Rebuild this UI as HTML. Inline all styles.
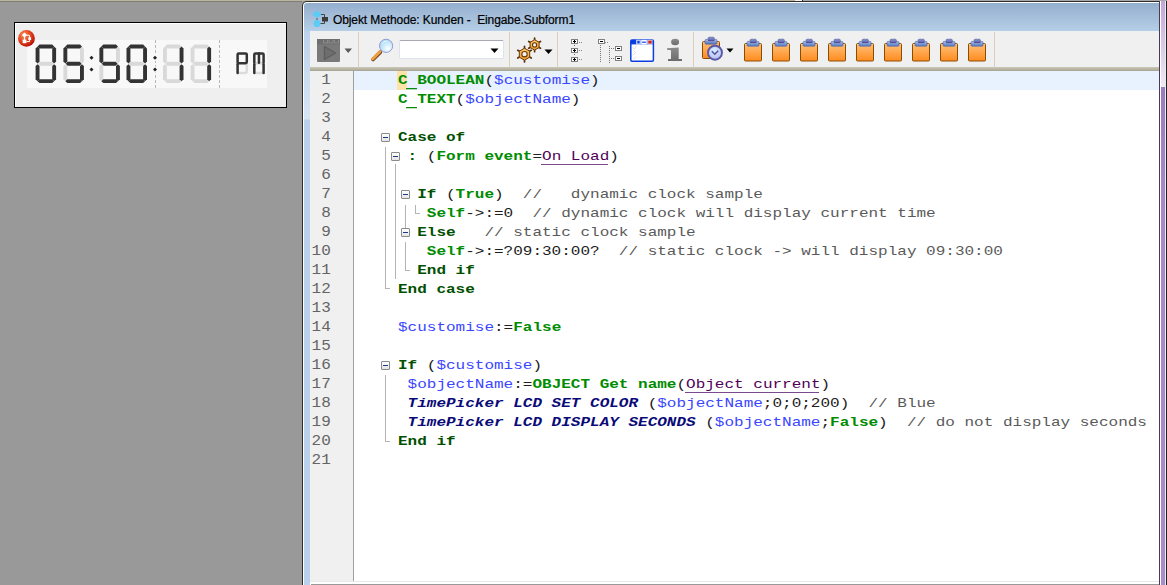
<!DOCTYPE html>
<html><head><meta charset="utf-8">
<style>
*{margin:0;padding:0;box-sizing:border-box}
html,body{width:1167px;height:585px;overflow:hidden;background:#999999;position:relative;font-family:"Liberation Sans",sans-serif}
.abs{position:absolute}
#topstrip{position:absolute;left:0;top:0;width:1167px;height:1px;background:#b9b5a0}
#topstrip2{position:absolute;left:0;top:1px;width:302px;height:1px;background:#7f7d74}
#clockbox{position:absolute;left:14px;top:22px;width:273px;height:86px;border:1px solid #000;background:#efefef;box-shadow:inset 1px 1px 0 #fff}
#clocksvg{position:absolute;left:0;top:0}
#win{position:absolute;left:302px;top:1px;width:858px;height:584px;background:#2e2e2e;border-top-left-radius:5px}
#frame{position:absolute;left:303px;top:2px;width:856px;height:583px;background:#fff;border-top-left-radius:4px}
#title{position:absolute;left:304px;top:3px;width:855px;height:28px;background:linear-gradient(#94aece,#b5cfe8);border-top-left-radius:3px}
#lframe{position:absolute;left:304px;top:31px;width:6px;height:554px;background:linear-gradient(#bcd3ec 0,#d6e5f4 88px,#b9d1ea 89px,#b9d1ea 100%)}
#ttext{position:absolute;left:333px;top:13px;font-size:12px;color:#000;white-space:pre;letter-spacing:-0.1px;-webkit-text-stroke:0.2px #000}
#toolbar{position:absolute;left:310px;top:31px;width:849px;height:36px;background:#f0f0f0}
#tbbot{position:absolute;left:310px;top:67px;width:849px;height:4px;background:linear-gradient(#ccc8b8,#a8a494)}
.sep{position:absolute;top:32px;width:1px;height:36px;background:#d8d0b8}
#gutter{position:absolute;left:310px;top:71px;width:43px;height:510px;background:#f0f0f0}
#gline{position:absolute;left:353px;top:71px;width:1px;height:510px;background:#a0a0a0}
#code{position:absolute;left:354px;top:71px;width:805px;height:510px;background:#fff}
#hl{position:absolute;left:354px;top:71px;width:805px;height:19px;background:#e8f2fe}
#cursor{position:absolute;left:397px;top:71px;width:10px;height:19px;background:#fde3a8}
#bot1{position:absolute;left:310px;top:581px;width:849px;height:1px;background:#e8e8e8}
#bot2{position:absolute;left:310px;top:582px;width:849px;height:2px;background:#fff}
#bot3{position:absolute;left:311px;top:584px;width:848px;height:1px;background:#999}
#rframe{position:absolute;left:1159px;top:1px;width:8px;height:584px;background:linear-gradient(90deg,#4a3a5a 0,#4a3a5a 1px,#fff 1px,#fff 2px,#c8b4dc 2px,#c8b4dc 6px,#f0e8f4 6px,#f0e8f4 7px,#222 7px)}
.ln{position:absolute;left:309.8px;width:21px;text-align:right;height:19px;line-height:19px;font-family:"Liberation Mono",monospace;font-size:16px;color:#646464;transform:scaleY(0.88);transform-origin:0 13px}
.cl{position:absolute;height:19px;line-height:19px;font-family:"Liberation Mono",monospace;font-size:16px;white-space:pre;color:#202020;transform:scaleY(0.85);transform-origin:0 13px}
.k{color:#008c00;font-weight:bold}
.c{color:#005000;font-weight:bold}
.v{color:#3a46ff}
.u{color:#50005a}
.n{color:#0a0a78;font-weight:bold;font-style:italic}
.m{color:#5a5a5a}
.p{color:#202020}
.cbox{position:absolute;width:9px;height:9px;border:1px solid #8a8a8a;border-radius:1px;background:linear-gradient(#fff,#e4e4e4)}
.cbox i{position:absolute;left:1px;top:3px;width:5px;height:1px;background:#1a3a8a}
.tl{position:absolute;background:#b4b4b4}
.ic{position:absolute}
</style></head><body>
<div id="topstrip"></div><div id="topstrip2"></div>
<div class="abs" style="left:795px;top:0;width:7px;height:1px;background:#f4f4f0"></div>
<div class="abs" style="left:802px;top:0;width:1px;height:1px;background:#333"></div>
<div class="abs" style="left:803px;top:0;width:364px;height:1px;background:#a8a8a8"></div>

<div id="clockbox"></div>
<div class="abs" style="left:27px;top:40px;width:240px;height:48px;background:#f8f8f8"></div>
<svg id="clocksvg" width="300" height="120" viewBox="0 0 300 120">
<line x1="155.5" y1="40" x2="155.5" y2="88" stroke="#b8b8b8" stroke-width="1" stroke-dasharray="3,2"/><line x1="219.5" y1="40" x2="219.5" y2="88" stroke="#b8b8b8" stroke-width="1" stroke-dasharray="3,2"/><g transform="translate(35.6,44.5)"><polygon points="2.30,19.30 4.25,17.35 16.25,17.35 18.20,19.30 16.25,21.25 4.25,21.25" fill="#d9d9d9"/><polygon points="1.95,1.95 3.90,0.00 16.60,0.00 18.55,1.95 16.60,3.90 3.90,3.90" fill="#333333"/><polygon points="18.55,1.95 20.50,3.90 20.50,17.00 18.55,18.95 16.60,17.00 16.60,3.90" fill="#333333"/><polygon points="18.55,19.65 20.50,21.60 20.50,34.70 18.55,36.65 16.60,34.70 16.60,21.60" fill="#333333"/><polygon points="1.95,36.65 3.90,34.70 16.60,34.70 18.55,36.65 16.60,38.60 3.90,38.60" fill="#333333"/><polygon points="1.95,19.65 3.90,21.60 3.90,34.70 1.95,36.65 0.00,34.70 0.00,21.60" fill="#333333"/><polygon points="1.95,1.95 3.90,3.90 3.90,17.00 1.95,18.95 0.00,17.00 0.00,3.90" fill="#333333"/></g><g transform="translate(63.4,44.5)"><polygon points="18.55,1.95 20.50,3.90 20.50,17.00 18.55,18.95 16.60,17.00 16.60,3.90" fill="#d9d9d9"/><polygon points="1.95,19.65 3.90,21.60 3.90,34.70 1.95,36.65 0.00,34.70 0.00,21.60" fill="#d9d9d9"/><polygon points="1.95,1.95 3.90,0.00 16.60,0.00 18.55,1.95 16.60,3.90 3.90,3.90" fill="#333333"/><polygon points="18.55,19.65 20.50,21.60 20.50,34.70 18.55,36.65 16.60,34.70 16.60,21.60" fill="#333333"/><polygon points="1.95,36.65 3.90,34.70 16.60,34.70 18.55,36.65 16.60,38.60 3.90,38.60" fill="#333333"/><polygon points="1.95,1.95 3.90,3.90 3.90,17.00 1.95,18.95 0.00,17.00 0.00,3.90" fill="#333333"/><polygon points="2.30,19.30 4.25,17.35 16.25,17.35 18.20,19.30 16.25,21.25 4.25,21.25" fill="#333333"/></g><g transform="translate(99.4,44.5)"><polygon points="18.55,1.95 20.50,3.90 20.50,17.00 18.55,18.95 16.60,17.00 16.60,3.90" fill="#d9d9d9"/><polygon points="1.95,19.65 3.90,21.60 3.90,34.70 1.95,36.65 0.00,34.70 0.00,21.60" fill="#d9d9d9"/><polygon points="1.95,1.95 3.90,0.00 16.60,0.00 18.55,1.95 16.60,3.90 3.90,3.90" fill="#333333"/><polygon points="18.55,19.65 20.50,21.60 20.50,34.70 18.55,36.65 16.60,34.70 16.60,21.60" fill="#333333"/><polygon points="1.95,36.65 3.90,34.70 16.60,34.70 18.55,36.65 16.60,38.60 3.90,38.60" fill="#333333"/><polygon points="1.95,1.95 3.90,3.90 3.90,17.00 1.95,18.95 0.00,17.00 0.00,3.90" fill="#333333"/><polygon points="2.30,19.30 4.25,17.35 16.25,17.35 18.20,19.30 16.25,21.25 4.25,21.25" fill="#333333"/></g><g transform="translate(126.5,44.5)"><polygon points="2.30,19.30 4.25,17.35 16.25,17.35 18.20,19.30 16.25,21.25 4.25,21.25" fill="#d9d9d9"/><polygon points="1.95,1.95 3.90,0.00 16.60,0.00 18.55,1.95 16.60,3.90 3.90,3.90" fill="#333333"/><polygon points="18.55,1.95 20.50,3.90 20.50,17.00 18.55,18.95 16.60,17.00 16.60,3.90" fill="#333333"/><polygon points="18.55,19.65 20.50,21.60 20.50,34.70 18.55,36.65 16.60,34.70 16.60,21.60" fill="#333333"/><polygon points="1.95,36.65 3.90,34.70 16.60,34.70 18.55,36.65 16.60,38.60 3.90,38.60" fill="#333333"/><polygon points="1.95,19.65 3.90,21.60 3.90,34.70 1.95,36.65 0.00,34.70 0.00,21.60" fill="#333333"/><polygon points="1.95,1.95 3.90,3.90 3.90,17.00 1.95,18.95 0.00,17.00 0.00,3.90" fill="#333333"/></g><g transform="translate(163.0,44.5)"><polygon points="1.95,1.95 3.90,0.00 16.60,0.00 18.55,1.95 16.60,3.90 3.90,3.90" fill="#d9d9d9"/><polygon points="1.95,36.65 3.90,34.70 16.60,34.70 18.55,36.65 16.60,38.60 3.90,38.60" fill="#d9d9d9"/><polygon points="1.95,19.65 3.90,21.60 3.90,34.70 1.95,36.65 0.00,34.70 0.00,21.60" fill="#d9d9d9"/><polygon points="1.95,1.95 3.90,3.90 3.90,17.00 1.95,18.95 0.00,17.00 0.00,3.90" fill="#d9d9d9"/><polygon points="2.30,19.30 4.25,17.35 16.25,17.35 18.20,19.30 16.25,21.25 4.25,21.25" fill="#d9d9d9"/><polygon points="18.55,1.95 20.50,3.90 20.50,17.00 18.55,18.95 16.60,17.00 16.60,3.90" fill="#333333"/><polygon points="18.55,19.65 20.50,21.60 20.50,34.70 18.55,36.65 16.60,34.70 16.60,21.60" fill="#333333"/></g><g transform="translate(190.6,44.5)"><polygon points="1.95,1.95 3.90,0.00 16.60,0.00 18.55,1.95 16.60,3.90 3.90,3.90" fill="#d9d9d9"/><polygon points="1.95,36.65 3.90,34.70 16.60,34.70 18.55,36.65 16.60,38.60 3.90,38.60" fill="#d9d9d9"/><polygon points="1.95,19.65 3.90,21.60 3.90,34.70 1.95,36.65 0.00,34.70 0.00,21.60" fill="#d9d9d9"/><polygon points="1.95,1.95 3.90,3.90 3.90,17.00 1.95,18.95 0.00,17.00 0.00,3.90" fill="#d9d9d9"/><polygon points="2.30,19.30 4.25,17.35 16.25,17.35 18.20,19.30 16.25,21.25 4.25,21.25" fill="#d9d9d9"/><polygon points="18.55,1.95 20.50,3.90 20.50,17.00 18.55,18.95 16.60,17.00 16.60,3.90" fill="#333333"/><polygon points="18.55,19.65 20.50,21.60 20.50,34.70 18.55,36.65 16.60,34.70 16.60,21.60" fill="#333333"/></g><polygon points="89.5,57.8 91.5,55.8 93.5,57.8 91.5,59.8" fill="#222"/><polygon points="89.5,69.6 91.5,67.6 93.5,69.6 91.5,71.6" fill="#222"/><rect x="153" y="55" width="4" height="6" fill="#f8f8f8"/><rect x="153" y="66.5" width="4" height="6" fill="#f8f8f8"/><polygon points="153.0,57.8 155.0,55.8 157.0,57.8 155.0,59.8" fill="#222"/><polygon points="153.0,69.6 155.0,67.6 157.0,69.6 155.0,71.6" fill="#222"/><line x1="238.6" y1="73.1" x2="245.8" y2="73.1" stroke="#dcdcdc" stroke-width="2.5" stroke-linecap="round"/><line x1="246.8" y1="64.2" x2="246.8" y2="72.1" stroke="#dcdcdc" stroke-width="2.5" stroke-linecap="round"/><path d="M237.6,62.4 L237.6,54.6 Q237.6,53.4 238.79999999999998,53.4 L245.60000000000002,53.4 Q246.8,53.4 246.8,54.6 L246.8,62.099999999999994 Q246.8,63.3 245.60000000000002,63.3 L238.6,63.3" stroke="#333" stroke-width="2.5" fill="none" stroke-linecap="round" stroke-linejoin="round"/><line x1="237.6" y1="64.2" x2="237.6" y2="73.1" stroke="#333" stroke-width="2.5" stroke-linecap="round"/><line x1="255.3" y1="63.3" x2="262.6" y2="63.3" stroke="#dcdcdc" stroke-width="2.5" stroke-linecap="round"/><line x1="255.3" y1="73.1" x2="262.6" y2="73.1" stroke="#dcdcdc" stroke-width="2.5" stroke-linecap="round"/><path d="M254.3,62.4 L254.3,54.6 Q254.3,53.4 255.5,53.4 L262.40000000000003,53.4 Q263.6,53.4 263.6,54.6 L263.6,62.4" stroke="#333" stroke-width="2.5" fill="none" stroke-linecap="round" stroke-linejoin="round"/><line x1="258.95000000000005" y1="53.4" x2="258.95000000000005" y2="62.699999999999996" stroke="#333" stroke-width="2.5" stroke-linecap="round"/><line x1="254.3" y1="64.2" x2="254.3" y2="73.1" stroke="#333" stroke-width="2.5" stroke-linecap="round"/><line x1="263.6" y1="64.2" x2="263.6" y2="73.1" stroke="#333" stroke-width="2.5" stroke-linecap="round"/>
<defs><radialGradient id="rb" cx="0.35" cy="0.3" r="0.75"><stop offset="0" stop-color="#f8905a"/><stop offset="0.55" stop-color="#e0401c"/><stop offset="0.9" stop-color="#c01a0a"/><stop offset="1" stop-color="#a00a04"/></radialGradient></defs>
<circle cx="26.45" cy="38.4" r="8.4" fill="url(#rb)"/>
<polygon points="24.5,32.4 27.1,35.1 24.5,37.8 21.9,35.1" fill="#fff"/>
<line x1="24.5" y1="37" x2="24.5" y2="40" stroke="#fff" stroke-width="1.2"/>
<rect x="22.6" y="39.6" width="3.8" height="3.6" fill="#fff"/>
<path d="M26.5 35.3 H29.6 V41.6 H26.4" stroke="#fff" stroke-width="1" fill="none"/>
<rect x="28.3" y="37.2" width="2.8" height="2.8" fill="#fff"/>
</svg>

<div id="win"></div>
<div id="frame"></div>
<div id="title"></div>
<div id="lframe"></div>
<svg class="ic" style="left:310px;top:9px" width="22" height="20" viewBox="0 0 22 20">
<polygon points="7,1.5 12,5.5 7,9 2,5.5" fill="#5ccbf5"/>
<line x1="7" y1="9" x2="7" y2="12" stroke="#555" stroke-width="1"/>
<circle cx="7" cy="14.5" r="3.5" fill="#5ccbf5"/>
<path d="M11 5.5 H14.5 V8 M14.5 12 V14.5 H10.5" stroke="#444" stroke-width="1" fill="none"/>
<rect x="12" y="8" width="6" height="4.5" fill="#3a3a3a"/>
</svg>
<div id="ttext">Objekt Methode: Kunden -  Eingabe.Subform1</div>

<div id="toolbar"></div>
<div id="tbbot"></div>
<div class="sep" style="left:358px"></div>
<div class="sep" style="left:509px"></div>
<div class="sep" style="left:557px"></div>
<div class="sep" style="left:693px"></div>
<div class="sep" style="left:994px"></div>

<!-- play icon -->
<svg class="ic" style="left:316px;top:38px" width="26" height="26" viewBox="0 0 26 26">
<rect x="1" y="1" width="23" height="23" rx="1" fill="#7a7a7a"/>
<rect x="1" y="1" width="23" height="5.5" fill="#6e6e6e"/>
<path d="M7.5 2 v3 h4 v-3 M13 2 v3 h4 v-3 M18.5 2 v3 h4 v-3" fill="none" stroke="#9a9a9a" stroke-width="0.7"/>
<path d="M8.5 8.5 L19.5 15 L8.5 21.5 Z" fill="#6e6e6e" stroke="#5e5e5e" stroke-width="1.4" stroke-linejoin="round"/>
</svg>
<svg class="ic" style="left:344px;top:48px" width="9" height="6"><polygon points="0.5,0.5 8,0.5 4.25,5" fill="#5a5a5a"/></svg>

<!-- magnifier -->
<svg class="ic" style="left:370px;top:37px" width="26" height="26" viewBox="0 0 26 26">
<defs><radialGradient id="lens" cx="0.65" cy="0.7" r="0.65"><stop offset="0" stop-color="#ffffff"/><stop offset="0.45" stop-color="#d6f0fc"/><stop offset="1" stop-color="#b0dcf6"/></radialGradient></defs>
<line x1="3" y1="22.5" x2="10.2" y2="15.3" stroke="#7a4a2a" stroke-width="3.8" stroke-linecap="round"/>
<line x1="2.6" y1="22" x2="9.8" y2="14.8" stroke="#f0a040" stroke-width="2.8" stroke-linecap="round"/>
<circle cx="16.1" cy="8.8" r="6.6" fill="url(#lens)" stroke="#8a90d4" stroke-width="0.9"/>
<path d="M12 7 A5 5 0 0 1 17 4" stroke="#fff" stroke-width="0.8" fill="none" opacity="0.8"/>
</svg>
<!-- combo -->
<div class="abs" style="left:399px;top:40px;width:105px;height:19px;background:#fff;border:1px solid #dde3ee;border-top-color:#a8a8b4;border-radius:2px"></div>
<svg class="ic" style="left:490px;top:48px" width="9" height="6"><polygon points="0.5,0.5 8.5,0.5 4.5,5" fill="#000"/></svg>

<!-- gears -->
<svg class="ic" style="left:513px;top:35px" width="30" height="30" viewBox="0 0 30 30">
<defs><linearGradient id="gg" x1="0" y1="0" x2="0" y2="1"><stop offset="0" stop-color="#ffc868"/><stop offset="1" stop-color="#f09a2a"/></linearGradient></defs><line x1="11.50" y1="14.40" x2="11.50" y2="11.40" stroke="#5a3208" stroke-width="1.7" stroke-linecap="round"/><line x1="15.66" y1="16.80" x2="18.25" y2="15.30" stroke="#5a3208" stroke-width="1.7" stroke-linecap="round"/><line x1="15.66" y1="21.60" x2="18.25" y2="23.10" stroke="#5a3208" stroke-width="1.7" stroke-linecap="round"/><line x1="11.50" y1="24.00" x2="11.50" y2="27.00" stroke="#5a3208" stroke-width="1.7" stroke-linecap="round"/><line x1="7.34" y1="21.60" x2="4.75" y2="23.10" stroke="#5a3208" stroke-width="1.7" stroke-linecap="round"/><line x1="7.34" y1="16.80" x2="4.75" y2="15.30" stroke="#5a3208" stroke-width="1.7" stroke-linecap="round"/><path d="M11.50,13.20 L16.70,16.20 L16.70,22.20 L11.50,25.20 L6.30,22.20 L6.30,16.20 Z" fill="url(#gg)" stroke="#6a3a08" stroke-width="1" stroke-linejoin="round"/><circle cx="11.5" cy="19.200000000000003" r="2.7" fill="#f2f2f2" stroke="#6a3a08" stroke-width="1.1"/><line x1="21.60" y1="5.74" x2="21.60" y2="3.10" stroke="#5a3208" stroke-width="1.7" stroke-linecap="round"/><line x1="25.20" y1="7.82" x2="27.49" y2="6.50" stroke="#5a3208" stroke-width="1.7" stroke-linecap="round"/><line x1="25.20" y1="11.98" x2="27.49" y2="13.30" stroke="#5a3208" stroke-width="1.7" stroke-linecap="round"/><line x1="21.60" y1="14.06" x2="21.60" y2="16.70" stroke="#5a3208" stroke-width="1.7" stroke-linecap="round"/><line x1="18.00" y1="11.98" x2="15.71" y2="13.30" stroke="#5a3208" stroke-width="1.7" stroke-linecap="round"/><line x1="18.00" y1="7.82" x2="15.71" y2="6.50" stroke="#5a3208" stroke-width="1.7" stroke-linecap="round"/><path d="M21.60,4.70 L26.10,7.30 L26.10,12.50 L21.60,15.10 L17.10,12.50 L17.10,7.30 Z" fill="url(#gg)" stroke="#6a3a08" stroke-width="1" stroke-linejoin="round"/><circle cx="21.600000000000023" cy="9.899999999999999" r="2.1" fill="#f2f2f2" stroke="#6a3a08" stroke-width="1.1"/>
</svg>
<svg class="ic" style="left:544px;top:49px" width="9" height="6"><polygon points="0.5,0.5 8.5,0.5 4.5,5" fill="#000"/></svg>

<!-- expand/collapse icons -->
<div class="abs" style="left:571px;top:39px;width:7px;height:5px;border:1px solid #808080;background:#fff"></div><div class="abs" style="left:573px;top:41px;width:3px;height:1px;background:#000"></div><div class="abs" style="left:574px;top:40px;width:1px;height:3px;background:#000"></div><div class="abs" style="left:579px;top:42px;width:1px;height:1px;background:#888"></div><div class="abs" style="left:581px;top:42px;width:1px;height:1px;background:#888"></div><div class="abs" style="left:571px;top:48px;width:7px;height:5px;border:1px solid #808080;background:#fff"></div><div class="abs" style="left:573px;top:50px;width:3px;height:1px;background:#000"></div><div class="abs" style="left:574px;top:49px;width:1px;height:3px;background:#000"></div><div class="abs" style="left:579px;top:50px;width:1px;height:1px;background:#888"></div><div class="abs" style="left:581px;top:50px;width:1px;height:1px;background:#888"></div><div class="abs" style="left:571px;top:57px;width:7px;height:5px;border:1px solid #808080;background:#fff"></div><div class="abs" style="left:573px;top:59px;width:3px;height:1px;background:#000"></div><div class="abs" style="left:574px;top:58px;width:1px;height:3px;background:#000"></div><div class="abs" style="left:579px;top:59px;width:1px;height:1px;background:#888"></div><div class="abs" style="left:581px;top:59px;width:1px;height:1px;background:#888"></div><div class="abs" style="left:574px;top:45px;width:1px;height:1px;background:#666"></div><div class="abs" style="left:574px;top:54px;width:1px;height:1px;background:#666"></div><div class="abs" style="left:598px;top:39px;width:7px;height:5px;border:1px solid #808080;background:#fff"></div><div class="abs" style="left:600px;top:41px;width:3px;height:1px;background:#000"></div><div class="abs" style="left:605px;top:42px;width:1px;height:1px;background:#888"></div><div class="abs" style="left:607px;top:42px;width:1px;height:1px;background:#888"></div><div class="abs" style="left:600px;top:45px;width:1px;height:1px;background:#777"></div><div class="abs" style="left:600px;top:47px;width:1px;height:1px;background:#777"></div><div class="abs" style="left:600px;top:49px;width:1px;height:1px;background:#777"></div><div class="abs" style="left:600px;top:51px;width:1px;height:1px;background:#777"></div><div class="abs" style="left:600px;top:53px;width:1px;height:1px;background:#777"></div><div class="abs" style="left:600px;top:55px;width:1px;height:1px;background:#777"></div><div class="abs" style="left:600px;top:57px;width:1px;height:1px;background:#777"></div><div class="abs" style="left:600px;top:59px;width:1px;height:1px;background:#777"></div><div class="abs" style="left:600px;top:61px;width:1px;height:1px;background:#777"></div><div class="abs" style="left:609px;top:46px;width:1px;height:1px;background:#777"></div><div class="abs" style="left:609px;top:48px;width:1px;height:1px;background:#777"></div><div class="abs" style="left:609px;top:50px;width:1px;height:1px;background:#777"></div><div class="abs" style="left:609px;top:52px;width:1px;height:1px;background:#777"></div><div class="abs" style="left:609px;top:54px;width:1px;height:1px;background:#777"></div><div class="abs" style="left:609px;top:56px;width:1px;height:1px;background:#777"></div><div class="abs" style="left:609px;top:58px;width:1px;height:1px;background:#777"></div><div class="abs" style="left:609px;top:60px;width:1px;height:1px;background:#777"></div><div class="abs" style="left:609px;top:62px;width:1px;height:1px;background:#777"></div><div class="abs" style="left:615px;top:46px;width:7px;height:5px;border:1px solid #808080;background:#fff"></div><div class="abs" style="left:617px;top:48px;width:3px;height:1px;background:#000"></div><div class="abs" style="left:615px;top:56px;width:7px;height:5px;border:1px solid #808080;background:#fff"></div><div class="abs" style="left:617px;top:58px;width:3px;height:1px;background:#000"></div><div class="abs" style="left:611px;top:48px;width:1px;height:1px;background:#777"></div><div class="abs" style="left:613px;top:48px;width:1px;height:1px;background:#777"></div><div class="abs" style="left:611px;top:58px;width:1px;height:1px;background:#777"></div><div class="abs" style="left:613px;top:58px;width:1px;height:1px;background:#777"></div>

<!-- window icon -->
<svg class="ic" style="left:629px;top:38px" width="27" height="26" viewBox="0 0 27 26">
<rect x="1.8" y="2" width="22.6" height="21.2" rx="1.2" fill="#fff" stroke="#0a3ee0" stroke-width="1.5"/>
<rect x="1.8" y="2" width="22.6" height="4.4" fill="#0a3ee0"/>
<rect x="7.3" y="1.8" width="4.4" height="4.6" fill="#fff"/>
<rect x="8.3" y="2.6" width="2.4" height="3" fill="#0a3ee0"/>
<rect x="12.2" y="1.8" width="5.6" height="4.6" fill="#fff"/>
<rect x="13.2" y="3.6" width="3.6" height="1.2" fill="#0a3ee0"/>
<rect x="18.4" y="1.8" width="5" height="4.6" fill="#fff"/>
<rect x="19.2" y="2.5" width="3.6" height="3.2" fill="#d02828"/>
<path d="M3.5 9 l2 2 l2 -3 M4 12 l3 3 M3.5 17 l3 -2 M4 21 l3 -2" stroke="#d4d4d4" stroke-width="0.7" fill="none"/>
</svg>
<!-- info -->
<svg class="ic" style="left:665px;top:37px" width="20" height="26" viewBox="0 0 20 26">
<defs><linearGradient id="ig" x1="0" y1="0" x2="0" y2="1"><stop offset="0" stop-color="#8c8c8c"/><stop offset="1" stop-color="#6c6c6c"/></linearGradient></defs>
<ellipse cx="10.1" cy="5" rx="4" ry="3.3" fill="url(#ig)"/>
<path d="M2 11.2 L13.7 10.6 V22 H17 V24 H3 V22 H6 V13.2 L2 12.8 Z" fill="url(#ig)"/>
</svg>
<!-- clipboard with clock -->
<svg class="ic" style="left:700px;top:35px" width="26" height="28" viewBox="0 0 26 28">
<defs><linearGradient id="cgx" x1="0" y1="0" x2="0" y2="1"><stop offset="0" stop-color="#ffc27a"/><stop offset="1" stop-color="#ff8a1e"/></linearGradient>
<linearGradient id="ccx" x1="0" y1="0" x2="0" y2="1"><stop offset="0" stop-color="#a9c4ee"/><stop offset="1" stop-color="#4e6db8"/></linearGradient>
<radialGradient id="clk" cx="0.45" cy="0.35" r="0.65"><stop offset="0" stop-color="#d8f0ff"/><stop offset="1" stop-color="#b8bcf4"/></radialGradient></defs>
<rect x="2.5" y="6.5" width="17" height="17" rx="1" fill="url(#cgx)" stroke="#8a4e00" stroke-width="1"/>
<rect x="8" y="2.2" width="6.4" height="3.6" rx="1.2" fill="#7a86c8" stroke="#56629e" stroke-width="0.6"/>
<rect x="5" y="4.4" width="12" height="4.8" rx="1" fill="url(#ccx)" stroke="#56629e" stroke-width="0.6"/>
<rect x="8" y="4.8" width="6.4" height="1.3" fill="#5a4e9a"/>
<circle cx="15" cy="17.7" r="7" fill="url(#clk)" stroke="#5a5aa8" stroke-width="1.9"/>
<path d="M11.8 16.3 L14.8 19.3 L18.2 15.8" stroke="#5050a0" stroke-width="1.5" fill="none"/>
</svg>
<svg class="ic" style="left:726px;top:48px" width="9" height="6"><polygon points="0.5,0.5 7.5,0.5 4,4.5" fill="#000"/></svg>
<svg class="ic" style="left:742px;top:37px" width="24" height="26" viewBox="0 0 24 26">
<defs><linearGradient id="cg744" x1="0" y1="0" x2="0" y2="1"><stop offset="0" stop-color="#ffc27a"/><stop offset="1" stop-color="#ff8a1e"/></linearGradient>
<linearGradient id="cc744" x1="0" y1="0" x2="0" y2="1"><stop offset="0" stop-color="#9cc0f0"/><stop offset="1" stop-color="#5878c0"/></linearGradient></defs>
<rect x="2.5" y="6.5" width="17" height="17.5" rx="1" fill="url(#cg744)" stroke="#8a4e00" stroke-width="1"/>
<rect x="8" y="2.2" width="6.4" height="3.6" rx="1.2" fill="#7a86c8" stroke="#56629e" stroke-width="0.6"/>
<rect x="5" y="4.4" width="12" height="4.8" rx="1" fill="url(#cc744)" stroke="#56629e" stroke-width="0.6"/>
<rect x="8" y="4.8" width="6.4" height="1.3" fill="#5a4e9a"/>
</svg><svg class="ic" style="left:770px;top:37px" width="24" height="26" viewBox="0 0 24 26">
<defs><linearGradient id="cg772" x1="0" y1="0" x2="0" y2="1"><stop offset="0" stop-color="#ffc27a"/><stop offset="1" stop-color="#ff8a1e"/></linearGradient>
<linearGradient id="cc772" x1="0" y1="0" x2="0" y2="1"><stop offset="0" stop-color="#9cc0f0"/><stop offset="1" stop-color="#5878c0"/></linearGradient></defs>
<rect x="2.5" y="6.5" width="17" height="17.5" rx="1" fill="url(#cg772)" stroke="#8a4e00" stroke-width="1"/>
<rect x="8" y="2.2" width="6.4" height="3.6" rx="1.2" fill="#7a86c8" stroke="#56629e" stroke-width="0.6"/>
<rect x="5" y="4.4" width="12" height="4.8" rx="1" fill="url(#cc772)" stroke="#56629e" stroke-width="0.6"/>
<rect x="8" y="4.8" width="6.4" height="1.3" fill="#5a4e9a"/>
</svg><svg class="ic" style="left:798px;top:37px" width="24" height="26" viewBox="0 0 24 26">
<defs><linearGradient id="cg800" x1="0" y1="0" x2="0" y2="1"><stop offset="0" stop-color="#ffc27a"/><stop offset="1" stop-color="#ff8a1e"/></linearGradient>
<linearGradient id="cc800" x1="0" y1="0" x2="0" y2="1"><stop offset="0" stop-color="#9cc0f0"/><stop offset="1" stop-color="#5878c0"/></linearGradient></defs>
<rect x="2.5" y="6.5" width="17" height="17.5" rx="1" fill="url(#cg800)" stroke="#8a4e00" stroke-width="1"/>
<rect x="8" y="2.2" width="6.4" height="3.6" rx="1.2" fill="#7a86c8" stroke="#56629e" stroke-width="0.6"/>
<rect x="5" y="4.4" width="12" height="4.8" rx="1" fill="url(#cc800)" stroke="#56629e" stroke-width="0.6"/>
<rect x="8" y="4.8" width="6.4" height="1.3" fill="#5a4e9a"/>
</svg><svg class="ic" style="left:826px;top:37px" width="24" height="26" viewBox="0 0 24 26">
<defs><linearGradient id="cg828" x1="0" y1="0" x2="0" y2="1"><stop offset="0" stop-color="#ffc27a"/><stop offset="1" stop-color="#ff8a1e"/></linearGradient>
<linearGradient id="cc828" x1="0" y1="0" x2="0" y2="1"><stop offset="0" stop-color="#9cc0f0"/><stop offset="1" stop-color="#5878c0"/></linearGradient></defs>
<rect x="2.5" y="6.5" width="17" height="17.5" rx="1" fill="url(#cg828)" stroke="#8a4e00" stroke-width="1"/>
<rect x="8" y="2.2" width="6.4" height="3.6" rx="1.2" fill="#7a86c8" stroke="#56629e" stroke-width="0.6"/>
<rect x="5" y="4.4" width="12" height="4.8" rx="1" fill="url(#cc828)" stroke="#56629e" stroke-width="0.6"/>
<rect x="8" y="4.8" width="6.4" height="1.3" fill="#5a4e9a"/>
</svg><svg class="ic" style="left:854px;top:37px" width="24" height="26" viewBox="0 0 24 26">
<defs><linearGradient id="cg856" x1="0" y1="0" x2="0" y2="1"><stop offset="0" stop-color="#ffc27a"/><stop offset="1" stop-color="#ff8a1e"/></linearGradient>
<linearGradient id="cc856" x1="0" y1="0" x2="0" y2="1"><stop offset="0" stop-color="#9cc0f0"/><stop offset="1" stop-color="#5878c0"/></linearGradient></defs>
<rect x="2.5" y="6.5" width="17" height="17.5" rx="1" fill="url(#cg856)" stroke="#8a4e00" stroke-width="1"/>
<rect x="8" y="2.2" width="6.4" height="3.6" rx="1.2" fill="#7a86c8" stroke="#56629e" stroke-width="0.6"/>
<rect x="5" y="4.4" width="12" height="4.8" rx="1" fill="url(#cc856)" stroke="#56629e" stroke-width="0.6"/>
<rect x="8" y="4.8" width="6.4" height="1.3" fill="#5a4e9a"/>
</svg><svg class="ic" style="left:882px;top:37px" width="24" height="26" viewBox="0 0 24 26">
<defs><linearGradient id="cg884" x1="0" y1="0" x2="0" y2="1"><stop offset="0" stop-color="#ffc27a"/><stop offset="1" stop-color="#ff8a1e"/></linearGradient>
<linearGradient id="cc884" x1="0" y1="0" x2="0" y2="1"><stop offset="0" stop-color="#9cc0f0"/><stop offset="1" stop-color="#5878c0"/></linearGradient></defs>
<rect x="2.5" y="6.5" width="17" height="17.5" rx="1" fill="url(#cg884)" stroke="#8a4e00" stroke-width="1"/>
<rect x="8" y="2.2" width="6.4" height="3.6" rx="1.2" fill="#7a86c8" stroke="#56629e" stroke-width="0.6"/>
<rect x="5" y="4.4" width="12" height="4.8" rx="1" fill="url(#cc884)" stroke="#56629e" stroke-width="0.6"/>
<rect x="8" y="4.8" width="6.4" height="1.3" fill="#5a4e9a"/>
</svg><svg class="ic" style="left:910px;top:37px" width="24" height="26" viewBox="0 0 24 26">
<defs><linearGradient id="cg912" x1="0" y1="0" x2="0" y2="1"><stop offset="0" stop-color="#ffc27a"/><stop offset="1" stop-color="#ff8a1e"/></linearGradient>
<linearGradient id="cc912" x1="0" y1="0" x2="0" y2="1"><stop offset="0" stop-color="#9cc0f0"/><stop offset="1" stop-color="#5878c0"/></linearGradient></defs>
<rect x="2.5" y="6.5" width="17" height="17.5" rx="1" fill="url(#cg912)" stroke="#8a4e00" stroke-width="1"/>
<rect x="8" y="2.2" width="6.4" height="3.6" rx="1.2" fill="#7a86c8" stroke="#56629e" stroke-width="0.6"/>
<rect x="5" y="4.4" width="12" height="4.8" rx="1" fill="url(#cc912)" stroke="#56629e" stroke-width="0.6"/>
<rect x="8" y="4.8" width="6.4" height="1.3" fill="#5a4e9a"/>
</svg><svg class="ic" style="left:938px;top:37px" width="24" height="26" viewBox="0 0 24 26">
<defs><linearGradient id="cg940" x1="0" y1="0" x2="0" y2="1"><stop offset="0" stop-color="#ffc27a"/><stop offset="1" stop-color="#ff8a1e"/></linearGradient>
<linearGradient id="cc940" x1="0" y1="0" x2="0" y2="1"><stop offset="0" stop-color="#9cc0f0"/><stop offset="1" stop-color="#5878c0"/></linearGradient></defs>
<rect x="2.5" y="6.5" width="17" height="17.5" rx="1" fill="url(#cg940)" stroke="#8a4e00" stroke-width="1"/>
<rect x="8" y="2.2" width="6.4" height="3.6" rx="1.2" fill="#7a86c8" stroke="#56629e" stroke-width="0.6"/>
<rect x="5" y="4.4" width="12" height="4.8" rx="1" fill="url(#cc940)" stroke="#56629e" stroke-width="0.6"/>
<rect x="8" y="4.8" width="6.4" height="1.3" fill="#5a4e9a"/>
</svg><svg class="ic" style="left:966px;top:37px" width="24" height="26" viewBox="0 0 24 26">
<defs><linearGradient id="cg968" x1="0" y1="0" x2="0" y2="1"><stop offset="0" stop-color="#ffc27a"/><stop offset="1" stop-color="#ff8a1e"/></linearGradient>
<linearGradient id="cc968" x1="0" y1="0" x2="0" y2="1"><stop offset="0" stop-color="#9cc0f0"/><stop offset="1" stop-color="#5878c0"/></linearGradient></defs>
<rect x="2.5" y="6.5" width="17" height="17.5" rx="1" fill="url(#cg968)" stroke="#8a4e00" stroke-width="1"/>
<rect x="8" y="2.2" width="6.4" height="3.6" rx="1.2" fill="#7a86c8" stroke="#56629e" stroke-width="0.6"/>
<rect x="5" y="4.4" width="12" height="4.8" rx="1" fill="url(#cc968)" stroke="#56629e" stroke-width="0.6"/>
<rect x="8" y="4.8" width="6.4" height="1.3" fill="#5a4e9a"/>
</svg>

<div id="gutter"></div>
<div id="gline"></div>
<div id="code"></div>
<div id="hl"></div>
<div id="cursor"></div>
<div id="bot1"></div><div id="bot2"></div><div id="bot3"></div>
<div id="rframe"></div>
<div class="abs" style="left:1161px;top:1px;width:4px;height:86px;background:linear-gradient(#c4a6d8,#d8c8e6 50%,#f0eaf4)"></div><div class="abs" style="left:1161px;top:87px;width:4px;height:498px;background:linear-gradient(#9c7cc0,#a888c8 20%,#aa8cc8)"></div>
<div class="tl" style="left:385px;top:147px;width:1px;height:142px"></div><div class="tl" style="left:385px;top:288px;width:5px;height:1px"></div><div class="tl" style="left:395px;top:164px;width:1px;height:115px"></div><div class="tl" style="left:405px;top:205px;width:1px;height:23px"></div><div class="tl" style="left:415px;top:205px;width:1px;height:9px"></div><div class="tl" style="left:415px;top:213px;width:5px;height:1px"></div><div class="tl" style="left:405px;top:242px;width:1px;height:29px"></div><div class="tl" style="left:405px;top:270px;width:5px;height:1px"></div><div class="tl" style="left:385px;top:375px;width:1px;height:67px"></div><div class="tl" style="left:385px;top:441px;width:5px;height:1px"></div>
<div class="cbox" style="left:381px;top:133px"><i></i></div><div class="cbox" style="left:391px;top:152px"><i></i></div><div class="cbox" style="left:401px;top:190px"><i></i></div><div class="cbox" style="left:401px;top:228px"><i></i></div><div class="cbox" style="left:381px;top:361px"><i></i></div>
<div class="ln" style="top:71px">1</div>
<div class="cl" style="top:71px;left:398.0px"><span class="k">C BOOLEAN</span><span class="p">(</span><span class="v">$customise</span><span class="p">)</span></div>
<div class="ln" style="top:90px">2</div>
<div class="cl" style="top:90px;left:398.0px"><span class="k">C TEXT</span><span class="p">(</span><span class="v">$objectName</span><span class="p">)</span></div>
<div class="ln" style="top:109px">3</div>
<div class="ln" style="top:128px">4</div>
<div class="cl" style="top:128px;left:398.0px"><span class="c">Case of</span></div>
<div class="ln" style="top:147px">5</div>
<div class="cl" style="top:147px;left:407.6px"><span class="c">:</span><span class="p"> (</span><span class="k">Form event</span><span class="p">=</span><span class="u">On Load</span><span class="p">)</span></div>
<div class="ln" style="top:166px">6</div>
<div class="ln" style="top:185px">7</div>
<div class="cl" style="top:185px;left:417.2px"><span class="c">If</span><span class="p"> (</span><span class="k">True</span><span class="p">)  </span><span class="m">//   dynamic clock sample</span></div>
<div class="ln" style="top:204px">8</div>
<div class="cl" style="top:204px;left:426.8px"><span class="k">Self</span><span class="p">-&gt;:=0  </span><span class="m">// dynamic clock will display current time</span></div>
<div class="ln" style="top:223px">9</div>
<div class="cl" style="top:223px;left:417.2px"><span class="c">Else</span><span class="p">   </span><span class="m">// static clock sample</span></div>
<div class="ln" style="top:242px">10</div>
<div class="cl" style="top:242px;left:426.8px"><span class="k">Self</span><span class="p">-&gt;:=?09:30:00?  </span><span class="m">// static clock -&gt; will display 09:30:00</span></div>
<div class="ln" style="top:261px">11</div>
<div class="cl" style="top:261px;left:417.2px"><span class="c">End if</span></div>
<div class="ln" style="top:280px">12</div>
<div class="cl" style="top:280px;left:398.0px"><span class="c">End case</span></div>
<div class="ln" style="top:299px">13</div>
<div class="ln" style="top:318px">14</div>
<div class="cl" style="top:318px;left:398.0px"><span class="v">$customise</span><span class="p">:=</span><span class="k">False</span></div>
<div class="ln" style="top:337px">15</div>
<div class="ln" style="top:356px">16</div>
<div class="cl" style="top:356px;left:398.0px"><span class="c">If</span><span class="p"> (</span><span class="v">$customise</span><span class="p">)</span></div>
<div class="ln" style="top:375px">17</div>
<div class="cl" style="top:375px;left:407.6px"><span class="v">$objectName</span><span class="p">:=</span><span class="k">OBJECT Get name</span><span class="p">(</span><span class="u">Object current</span><span class="p">)</span></div>
<div class="ln" style="top:394px">18</div>
<div class="cl" style="top:394px;left:407.6px"><span class="n">TimePicker LCD SET COLOR</span><span class="p"> (</span><span class="v">$objectName</span><span class="p">;0;0;200)  </span><span class="m">// Blue</span></div>
<div class="ln" style="top:413px">19</div>
<div class="cl" style="top:413px;left:407.6px"><span class="n">TimePicker LCD DISPLAY SECONDS</span><span class="p"> (</span><span class="v">$objectName</span><span class="p">;</span><span class="k">False</span><span class="p">)  </span><span class="m">// do not display seconds</span></div>
<div class="ln" style="top:432px">20</div>
<div class="cl" style="top:432px;left:398.0px"><span class="c">End if</span></div>
<div class="ln" style="top:451px">21</div>
<div class="abs" style="left:541px;top:164px;width:67px;height:1px;background:#7a4a8e"></div>
<div class="abs" style="left:685px;top:392px;width:134px;height:1px;background:#7a4a8e"></div>
<div class="abs" style="left:406px;top:88px;width:11px;height:1px;background:#0a8a0a;box-shadow:0 0.5px 0 rgba(10,138,10,0.5)"></div>
<div class="abs" style="left:406px;top:107px;width:11px;height:1px;background:#0a8a0a;box-shadow:0 0.5px 0 rgba(10,138,10,0.5)"></div>
</body></html>
